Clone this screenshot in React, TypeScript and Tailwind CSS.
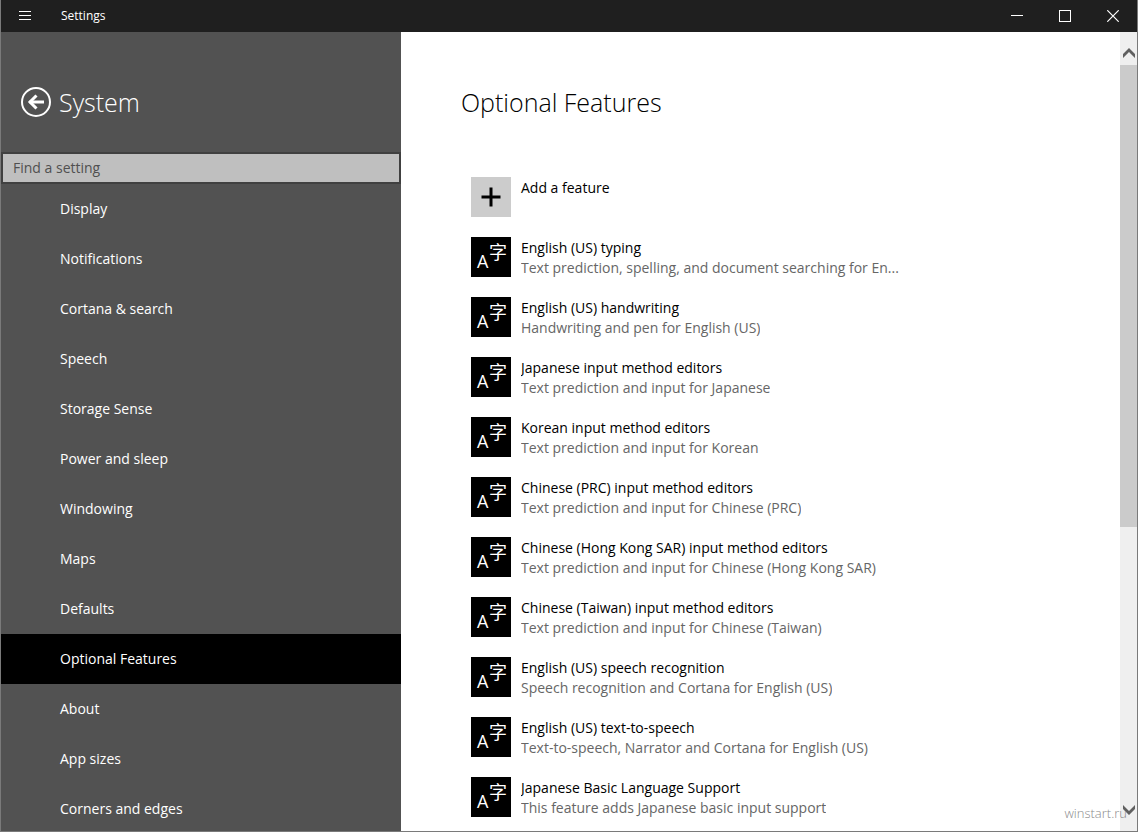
import clsx from "clsx";

const navItems = [
  "Display",
  "Notifications",
  "Cortana & search",
  "Speech",
  "Storage Sense",
  "Power and sleep",
  "Windowing",
  "Maps",
  "Defaults",
  "Optional Features",
  "About",
  "App sizes",
  "Corners and edges",
];

const features = [
  { title: "English (US) typing", text: "Text prediction, spelling, and document searching for En..." },
  { title: "English (US) handwriting", text: "Handwriting and pen for English (US)" },
  { title: "Japanese input method editors", text: "Text prediction and input for Japanese" },
  { title: "Korean input method editors", text: "Text prediction and input for Korean" },
  { title: "Chinese (PRC) input method editors", text: "Text prediction and input for Chinese (PRC)" },
  { title: "Chinese (Hong Kong SAR) input method editors", text: "Text prediction and input for Chinese (Hong Kong SAR)" },
  { title: "Chinese (Taiwan) input method editors", text: "Text prediction and input for Chinese (Taiwan)" },
  { title: "English (US) speech recognition", text: "Speech recognition and Cortana for English (US)" },
  { title: "English (US) text-to-speech", text: "Text-to-speech, Narrator and Cortana for English (US)" },
  { title: "Japanese Basic Language Support", text: "This feature adds Japanese basic input support" },
];

function TitleBar() {
  return (
    <header className="flex h-8 shrink-0 items-center bg-[#1f1f1f] text-white">
      <button aria-label="Menu" className="flex h-8 w-12 items-center justify-center">
        <svg width="12" height="10" viewBox="0 0 12 10" stroke="currentColor" shapeRendering="crispEdges">
          <path d="M0 .5h12M0 4.5h12M0 8.5h12" />
        </svg>
      </button>
      <span className="ml-3 text-xs">Settings</span>
      <div className="ml-auto flex">
        <button aria-label="Minimize" className="flex h-8 w-12 items-center justify-center">
          <svg width="12" height="12" viewBox="0 0 12 12" stroke="currentColor" shapeRendering="crispEdges">
            <path d="M0 5.5h12" />
          </svg>
        </button>
        <button aria-label="Maximize" className="flex h-8 w-12 items-center justify-center">
          <svg width="12" height="12" viewBox="0 0 12 12" fill="none" stroke="currentColor" shapeRendering="crispEdges">
            <rect x=".5" y=".5" width="11" height="11" />
          </svg>
        </button>
        <button aria-label="Close" className="flex h-8 w-12 items-center justify-center">
          <svg width="12" height="12" viewBox="0 0 12 12" stroke="currentColor" strokeWidth="1.2">
            <path d="M.3.3l11.4 11.4M11.7.3L.3 11.7" />
          </svg>
        </button>
      </div>
    </header>
  );
}

function Sidebar() {
  return (
    <aside className="flex w-[400px] shrink-0 flex-col bg-[#525252] text-white">
      <div className="flex h-[120px] shrink-0 items-center gap-2 pt-5 pl-5">
        <button aria-label="Back">
          <svg width="30" height="30" viewBox="0 0 30 30" fill="none" stroke="currentColor">
            <circle cx="15" cy="15" r="14" strokeWidth="2" />
            <path d="M8.5 15H23" strokeWidth="3" />
            <path d="M15.500 8.500L9 15l6.500 6.500" strokeWidth="3" />
          </svg>
        </button>
        <h1 className="text-[25px] leading-8 font-light">System</h1>
      </div>
      <input
        type="text"
        aria-label="Find a setting"
        placeholder="Find a setting"
        className="h-8 w-full shrink-0 border-2 border-[#404040] bg-[#bfbfbf] px-2.5 pb-0.5 text-sm text-black outline-none placeholder:text-[#505050]"
      />
      <nav>
        {navItems.map((item) => (
          <a
            key={item}
            href="#"
            className={clsx(
              "flex h-[50px] items-center pl-[59px] text-sm",
              item === "Optional Features" && "bg-black"
            )}
          >
            {item}
          </a>
        ))}
      </nav>
    </aside>
  );
}

function LanguageIcon() {
  return (
    <div aria-hidden="true" className="relative size-10 shrink-0 bg-black text-white">
      <span className="absolute top-3.5 left-1.5 text-lg leading-5">A</span>
      <span className="absolute top-1 right-1 font-['Noto_Sans_CJK_SC',sans-serif] text-lg leading-5">字</span>
    </div>
  );
}

function FeatureList() {
  return (
    <ul className="mt-[59px] space-y-5 px-2.5">
      <li>
        <button className="flex gap-2.5 text-left">
          <span className="flex size-10 shrink-0 items-center justify-center bg-[#cccccc]">
            <svg width="20" height="20" viewBox="0 0 20 20" stroke="black" strokeWidth="3">
              <path d="M10 .5v19M.5 10h19" />
            </svg>
          </span>
          <span className="pt-px text-sm leading-5">Add a feature</span>
        </button>
      </li>
      {features.map((feature) => (
        <li key={feature.title} className="flex h-10 gap-2.5">
          <LanguageIcon />
          <div className="min-w-0 pt-px text-sm leading-5">
            <p className="truncate">{feature.title}</p>
            <p className="truncate text-[#666666]">{feature.text}</p>
          </div>
        </li>
      ))}
    </ul>
  );
}

function ScrollBar() {
  return (
    <div className="flex w-[17px] shrink-0 flex-col bg-[#efefef]">
      <button aria-label="Scroll up" className="flex h-[33px] shrink-0 items-center justify-center pt-2">
        <svg width="12" height="10" viewBox="0 0 12 10" fill="#606060">
          <path d="M6 0l6 6v4L6 4 0 10V6z" />
        </svg>
      </button>
      <div className="min-h-0 flex-1">
        <div className="h-[63%] bg-[#cbcbcb]" />
      </div>
      <button aria-label="Scroll down" className="flex h-8 shrink-0 items-center justify-center pb-2.5">
        <svg width="12" height="10" viewBox="0 0 12 10" fill="#606060">
          <path d="M6 10l6-6V0L6 6 0 0v4z" />
        </svg>
      </button>
    </div>
  );
}

export default function App() {
  return (
    <div className="relative flex h-screen flex-col overflow-hidden border-x border-b border-[#7a7a7a] bg-white font-['Open_Sans','Noto_Sans',sans-serif] text-black">
      <TitleBar />
      <div className="flex min-h-0 flex-1 overflow-hidden">
        <Sidebar />
        <main className="min-w-0 flex-1 overflow-hidden pt-[54px] pl-[60px]">
          <h2 className="text-[25px] leading-8 font-light">Optional Features</h2>
          <FeatureList />
        </main>
        <ScrollBar />
      </div>
      <span className="absolute right-2.5 bottom-2 text-[13px] font-light text-[#8a8a8a]">winstart.ru</span>
    </div>
  );
}
